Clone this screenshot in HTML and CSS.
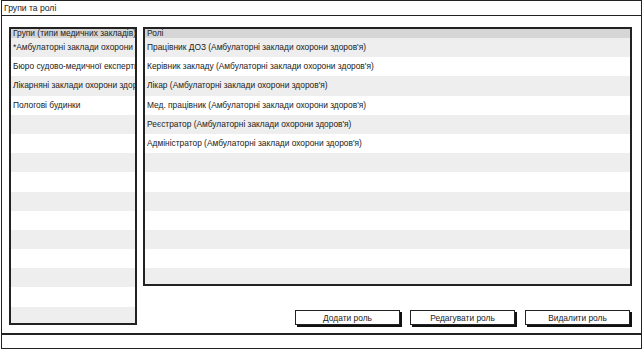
FILE: index.html
```html
<!DOCTYPE html>
<html lang="uk">
<head>
    <meta charset="utf-8">
    <title>Групи та ролі</title>
    <link rel="stylesheet" href="styles.css">
</head>
<body>
    <div class="window">
        <div class="titlebar">Групи та ролі</div>
        <div class="content">
            <div class="list list_groups">
                <div class="list_header">Групи (типи медичних закладів)</div>
                <div class="row">*Амбулаторні заклади охорони здоров'я</div>
                <div class="row">Бюро судово-медичної експертизи</div>
                <div class="row">Лікарняні заклади охорони здоров'я</div>
                <div class="row">Пологові будинки</div>
                <div class="row"></div>
                <div class="row"></div>
                <div class="row"></div>
                <div class="row"></div>
                <div class="row"></div>
                <div class="row"></div>
                <div class="row"></div>
                <div class="row"></div>
                <div class="row"></div>
                <div class="row"></div>
                <div class="row"></div>
                <div class="row"></div>
            </div>
            <div class="right_side">
                <div class="list list_roles">
                    <div class="list_header">Ролі</div>
                    <div class="row">Працівник ДОЗ (Амбулаторні заклади охорони здоров'я)</div>
                    <div class="row">Керівник закладу (Амбулаторні заклади охорони здоров'я)</div>
                    <div class="row">Лікар (Амбулаторні заклади охорони здоров'я)</div>
                    <div class="row">Мед. працівник (Амбулаторні заклади охорони здоров'я)</div>
                    <div class="row">Реєстратор (Амбулаторні заклади охорони здоров'я)</div>
                    <div class="row">Адміністратор (Амбулаторні заклади охорони здоров'я)</div>
                    <div class="row"></div>
                    <div class="row"></div>
                    <div class="row"></div>
                    <div class="row"></div>
                    <div class="row"></div>
                    <div class="row"></div>
                    <div class="row"></div>
                    <div class="row"></div>
                </div>
                <div class="buttons">
                    <button class="btn">Додати роль</button>
                    <button class="btn">Редагувати роль</button>
                    <button class="btn">Видалити роль</button>
                </div>
            </div>
        </div>
        <div class="statusbar"></div>
    </div>
</body>
</html>
```

FILE: styles.css
```css
html, body {
    margin: 0;
    padding: 0;
    background-color: #fff;
}
body {
    font-family: "Liberation Sans", Arial, sans-serif;
    font-size: 8.4px;
    color: #222;
}
.window {
    box-sizing: border-box;
    width: 641px;
    height: 349px;
    margin-left: 1px;
    border: 1px solid #222;
    display: flex;
    flex-direction: column;
}
.titlebar {
    height: 14px;
    line-height: 14px;
    padding-left: 2px;
    font-size: 8.6px;
    border-bottom: 1px solid #222;
}
.content {
    flex: 1;
    min-height: 0;
    padding: 11px 9px 8px 7px;
    display: grid;
    grid-template-columns: 128px 1fr;
    gap: 6px;
}
.list {
    border: 2px solid #222;
    overflow: hidden;
    background-color: #fff;
}
.list_header {
    height: 9px;
    line-height: 9px;
    padding-left: 2px;
    background-color: #d6d6d6;
    white-space: nowrap;
    overflow: hidden;
}
.row {
    height: 19.2px;
    line-height: 19px;
    padding-left: 2px;
    white-space: nowrap;
    overflow: hidden;
}
.row:nth-child(even) {
    background-color: #eeeeee;
}
.right_side {
    display: flex;
    flex-direction: column;
    min-height: 0;
}
.list_roles {
    flex: 1;
}
.buttons {
    display: flex;
    justify-content: flex-end;
    gap: 10px;
    margin-top: 24px;
    padding-right: 2px;
}
.btn {
    box-sizing: border-box;
    width: 105px;
    height: 15px;
    padding: 0;
    font-family: inherit;
    font-size: 8.4px;
    color: #222;
    background-color: #fff;
    border: 1px solid #222;
    border-radius: 0;
    box-shadow: 2px 2px 0 #111;
}
.statusbar {
    height: 13px;
    border-top: 2px solid #222;
}
```
